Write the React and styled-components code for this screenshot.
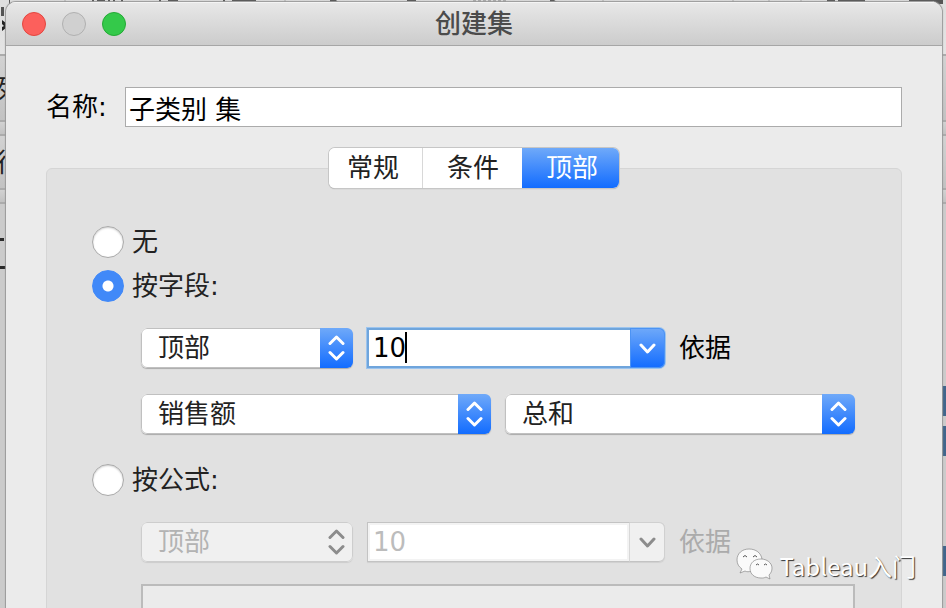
import React, { useState } from 'react';
import styled, { createGlobalStyle, css } from 'styled-components';

const GlobalStyle = createGlobalStyle`
  * {
    box-sizing: border-box;
  }
  body {
    margin: 0;
    font-family: 'DejaVu Sans', 'Noto Sans CJK SC', sans-serif;
    font-size: 26px;
    line-height: 38px;
    color: #222;
  }
  button, input, select, textarea {
    margin: 0;
    padding: 0;
    border: 0;
    border-radius: 0;
    font: inherit;
    color: inherit;
    outline: none;
  }
`;

const blue = 'linear-gradient(#6fa9f9, #126cff)';

const Desktop = styled.div`
  position: relative;
  height: 100vh;
  padding: 2px 4px 0 6px;
  overflow: hidden;
  background: #cbcbcb;
`;

// workbook window that shows around the dialog
const Backdrop = styled.div`
  position: absolute;
  inset: 0;
`;
const Shelf = styled.div`
  height: ${(props) => props.$height}px;
  border-bottom: 2px solid #ababab;
  background: ${(props) => (props.$light ? 'linear-gradient(#dedede, #e4e4e4)' : 'linear-gradient(#d2d2d2, #c2c2c2)')};
  line-height: ${(props) => props.$height}px;
  text-indent: -4px;
`;
const ToolbarIcons = styled.svg`
  display: block;
`;
const Sheet = styled.div`
  display: flex;
  justify-content: space-between;
`;
const HeaderMarks = styled.svg`
  display: block;
`;
const Bars = styled.div`
  display: grid;
  grid-template-rows: 30px 30px 30px;
  gap: 10px;
  width: 4px;
  padding-top: 182px;
`;
const Bar = styled.div`
  background: #41658b;
  &:last-child {
    margin: 80px 0 -80px;
  }
`;

const Dialog = styled.form`
  position: relative;
  height: 100%;
  border-radius: 10px 10px 0 0;
  background: #ebebeb;
  box-shadow: 0 0 1px 1px #999;
  overflow: hidden;
`;
const TitleBar = styled.header`
  display: grid;
  grid-template-columns: 1fr auto 1fr;
  align-items: center;
  height: 44px;
  padding: 0 16px;
  border-bottom: 1px solid #a6a6a6;
  background: linear-gradient(#e8e8e8, #cccccc);
  box-shadow: inset 0 1px #f4f4f4;
`;
const WindowButtons = styled.div`
  display: flex;
  gap: 16px;
`;
const WindowButton = styled.button`
  width: 24px;
  height: 24px;
  border: 1px solid ${(props) => props.$edge};
  border-radius: 50%;
  background: ${(props) => props.$color};
`;
const Title = styled.h1`
  margin: 0;
  font-size: 26px;
  font-weight: 500;
  line-height: 38px;
  color: #4b4b4b;
`;

const Content = styled.div`
  display: flex;
  flex-direction: column;
  padding: 41px 40px 0;
`;
const NameRow = styled.div`
  display: flex;
  align-items: center;
  color: #000;
`;
const NameLabel = styled.label`
  width: 79px;
`;
const NameInput = styled.input`
  flex: 1;
  min-width: 0;
  height: 40px;
  padding: 0 3px;
  border: 1px solid #ababab;
  background: #fff;
`;

const Tabs = styled.div`
  position: relative;
  z-index: 1;
  display: flex;
  align-self: center;
  height: 40px;
  margin: 21px 0 -20px;
  border-radius: 6px;
  background: #fff;
  box-shadow: 0 0 0 1px #c6c6c6, 0 1px 1px #999;
  overflow: hidden;
`;
const Tab = styled.button`
  padding: 0 23px 0 24px;
  background: ${(props) => (props.$active ? blue : '#fff')};
  color: ${(props) => (props.$active ? '#fff' : '#222')};
  &:first-child {
    padding-left: 18px;
    border-right: 1px solid #d8d8d8;
  }
  &:last-child {
    padding-right: 21px;
  }
`;

const Panel = styled.section`
  padding: 57px 46px 0 45px;
  border: 1px solid #d5d5d5;
  border-radius: 6px;
  background: #e1e1e1;
`;
const Option = styled.label`
  display: flex;
  align-items: center;
  gap: 8px;
  height: 32px;
  margin-bottom: ${(props) => props.$space}px;
`;
const Radio = styled.input`
  appearance: none;
  width: 32px;
  height: 32px;
  border: 1px solid #a9a9a9;
  border-radius: 50%;
  background: #fff;
  box-shadow: inset 0 1px 2px #ccc;
  &:checked {
    border-color: #4189f8;
    background: radial-gradient(circle, #fff 5px, #4189f8 6px);
    box-shadow: none;
  }
`;
const Settings = styled.div`
  padding-left: 49px;
  margin-bottom: 30px;
`;
const Row = styled.div`
  display: flex;
  align-items: center;
  gap: 14px;
  margin-bottom: 26px;
  color: ${(props) => (props.$disabled ? '#ababab' : '#000')};
`;

const SelectBox = styled.div`
  display: grid;
  grid-template-columns: 1fr 33px;
  flex: ${(props) => (props.$fill ? '1' : '0 0 212px')};
  height: 40px;
  border-radius: 6px;
  background: ${(props) => (props.$disabled ? '#f0f0f0' : '#fff')};
  box-shadow: ${(props) => (props.$disabled ? '0 1px 1px #ccc' : '0 1px 1px #aaa')};
  overflow: hidden;
`;
const NativeSelect = styled.select`
  appearance: none;
  grid-area: 1 / 1 / 2 / 3;
  padding: 0 40px 0 16px;
  border: 1px solid #c0c0c0;
  border-radius: 6px;
  background: transparent;
  color: #222;
  opacity: 1;
  &:disabled {
    border-color: #cdcdcd;
    color: #b3b3b3;
  }
`;
const cap = css`
  display: flex;
  align-items: center;
  justify-content: center;
  background: ${(props) => (props.$disabled ? '#f0f0f0' : blue)};
  color: ${(props) => (props.$disabled ? '#8c8c8c' : '#fff')};
`;
const SelectCap = styled.span`
  ${cap}
  grid-area: 1 / 2;
  pointer-events: none;
  ${(props) => props.$disabled && 'background: transparent;'}
`;

const ComboBox = styled.div`
  position: relative;
  display: flex;
  width: 298px;
  height: 40px;
  border-radius: 0 6px 6px 0;
  box-shadow: ${(props) => (props.$disabled ? '0 1px 1px #d0d0d0' : '0 0 0 1px #9cc4ee')};
`;
const ComboInput = styled.input`
  flex: 1;
  min-width: 0;
  padding: 0 4px;
  border: 2px solid #6fa5dc;
  border-right: 0;
  background: #fff;
  color: #000;
  caret-color: transparent;
  &:disabled {
    padding: 0 5px;
    border: 1px solid #c3c3c3;
    border-right-color: #d8d8d8;
    box-shadow: inset 0 0 0 2px #f3f3f3;
    color: #bcbcbc;
  }
`;
const Caret = styled.span`
  position: absolute;
  top: 4px;
  left: calc(5px + 2ch);
  width: 2px;
  height: 31px;
  background: #000;
`;
const ComboButton = styled.button`
  ${cap}
  width: 35px;
  border-radius: 0 6px 6px 0;
  box-shadow: ${(props) => (props.$disabled ? 'inset -1px 0 #d0d0d0, inset 0 1px #d0d0d0, inset 0 -1px #c3c3c3' : 'inset 0 0 0 1px #4c93f4')};
`;

const Formula = styled.textarea`
  display: block;
  width: 100%;
  height: 180px;
  margin-top: -4px;
  border: 2px solid #bbb;
  background: #ebebeb;
  resize: none;
`;

const Watermark = styled.div`
  position: absolute;
  right: 30px;
  bottom: 24px;
  display: flex;
  align-items: center;
  gap: 6px;
  font-family: 'Noto Sans CJK SC', sans-serif;
  font-size: 24px;
  line-height: 36px;
  color: #fff;
  text-shadow: 1px 1px 1px #333;
`;

const UpDown = () => (
  <svg width="17" height="26" viewBox="0 0 17 26" fill="none" stroke="currentColor" strokeWidth="3" strokeLinecap="round" strokeLinejoin="round">
    <path d="M2 8.500 8.500 2 15 8.500M2 17.500 8.500 24 15 17.500" />
  </svg>
);

const Down = () => (
  <svg width="17" height="12" viewBox="0 0 17 12" fill="none" stroke="currentColor" strokeWidth="3" strokeLinecap="round" strokeLinejoin="round">
    <path d="M2 3 8.500 10 15 3" />
  </svg>
);

const WeChat = () => (
  <svg width="37" height="36" viewBox="0 0 37 36" fill="#fafafa" stroke="#777" strokeWidth="0.6">
    <path d="M13 1C6 1 1 5.500 1 12c0 4 2 7 5 9l-2 4 5-2c2 1 4 1 6 0 9-1 12-6 11-12C25 5 20 1 13 1Z" />
    <path d="M25 11c-7 0-11 4-11 9.500S18.500 30 25 30c2 0 3 0 5-1l4 2-1-4c2-2 3-4 3-7 0-5-5-9-11-9Z" />
    <path d="M7 9q2-3 4 0M17 9q2-3 4 0M20 17q1.500-2 3 0M28 17q1.500-2 3 0" fill="none" stroke="#555" strokeWidth="1" />
  </svg>
);

const Select = ({ options, label, fill, disabled }) => (
  <SelectBox $fill={fill} $disabled={disabled}>
    <NativeSelect aria-label={label} disabled={disabled}>
      {options.map((option) => (
        <option key={option}>{option}</option>
      ))}
    </NativeSelect>
    <SelectCap $disabled={disabled}>
      <UpDown />
    </SelectCap>
  </SelectBox>
);

const Combo = ({ id, disabled }) => (
  <ComboBox $disabled={disabled}>
    <ComboInput id={id} defaultValue="10" disabled={disabled} />
    {!disabled && <Caret />}
    <ComboButton type="button" aria-label="选择值" disabled={disabled} $disabled={disabled}>
      <Down />
    </ComboButton>
  </ComboBox>
);

const Workbook = () => (
  <Backdrop aria-hidden="true">
    <Shelf $height={56} $light>
      <ToolbarIcons width="946" height="34" fill="#555">
        <path d="M9 0h1v4H9zM92 0h2v2h-2zM97 0h8v1h-8zM108 0h2v2h-2zM113 0h2v2h-2zM121 0h2v2h-2zM159 0h2v2h-2zM168 0h10v1h-10zM223 0h2v2h-2zM232 0h24v1h-24zM330 0h6l2 2h-8zM407 0h9v1h-9zM550 0h4l3 2h-7zM827 0h8v2h-8zM838 0h27v2h-27zM909 0h34v4h-9v-3h-25z" />
        <path d="M473 1h34" stroke="#777" strokeDasharray="3 2" />
        <path d="M65 0v2M285 0v2M603 0v2M733 0v2M769 0v2M801 0v2" stroke="#aaa" />
        <path d="M1 7h3v9H1z" />
        <path d="m2 20 4 3v5l-4 3v-4l2-1-2-2z" fill="#222" />
      </ToolbarIcons>
    </Shelf>
    <Shelf $height={66}>列</Shelf>
    <Shelf $height={14} />
    <Shelf $height={54}>行</Shelf>
    <Shelf $height={14} />
    <Sheet>
      <HeaderMarks width="6" height="70" fill="#2a2a2a">
        <path d="M0 34h4v3H0zM0 62h6v3H0z" />
      </HeaderMarks>
      <Bars>
        <Bar />
        <Bar />
        <Bar />
      </Bars>
    </Sheet>
  </Backdrop>
);

const App = () => {
  const [tab, setTab] = useState('顶部');
  const [mode, setMode] = useState('field');

  return (
    <Desktop>
      <GlobalStyle />
      <Workbook />
      <Dialog>
        <TitleBar>
          <WindowButtons>
            <WindowButton type="button" aria-label="关闭" $color="#fc605c" $edge="#e2463f" />
            <WindowButton type="button" aria-label="最小化" $color="#d0d0d0" $edge="#b0b0b0" />
            <WindowButton type="button" aria-label="缩放" $color="#34c94a" $edge="#24a935" />
          </WindowButtons>
          <Title>创建集</Title>
        </TitleBar>
        <Content>
          <NameRow>
            <NameLabel htmlFor="name">名称:</NameLabel>
            <NameInput id="name" defaultValue="子类别 集" />
          </NameRow>
          <Tabs role="tablist">
            {['常规', '条件', '顶部'].map((name) => (
              <Tab key={name} type="button" role="tab" aria-selected={tab === name} $active={tab === name} onClick={() => setTab(name)}>
                {name}
              </Tab>
            ))}
          </Tabs>
          <Panel>
            <Option $space={12}>
              <Radio type="radio" name="mode" checked={mode === 'none'} onChange={() => setMode('none')} />
              无
            </Option>
            <Option $space={26}>
              <Radio type="radio" name="mode" checked={mode === 'field'} onChange={() => setMode('field')} />
              按字段:
            </Option>
            <Settings>
              <Row>
                <Select label="方向" options={['顶部', '底部']} />
                <Combo id="field-count" />
                <label htmlFor="field-count">依据</label>
              </Row>
              <Row>
                <Select fill label="字段" options={['销售额', '利润', '数量']} />
                <Select fill label="聚合" options={['总和', '平均值']} />
              </Row>
            </Settings>
            <Option $space={26}>
              <Radio type="radio" name="mode" checked={mode === 'formula'} onChange={() => setMode('formula')} />
              按公式:
            </Option>
            <Settings>
              <Row $disabled>
                <Select disabled label="方向" options={['顶部', '底部']} />
                <Combo id="formula-count" disabled />
                <label htmlFor="formula-count">依据</label>
              </Row>
              <Formula aria-label="公式" disabled />
            </Settings>
          </Panel>
        </Content>
      </Dialog>
      <Watermark>
        <WeChat />
        Tableau入门
      </Watermark>
    </Desktop>
  );
};

export default App;
